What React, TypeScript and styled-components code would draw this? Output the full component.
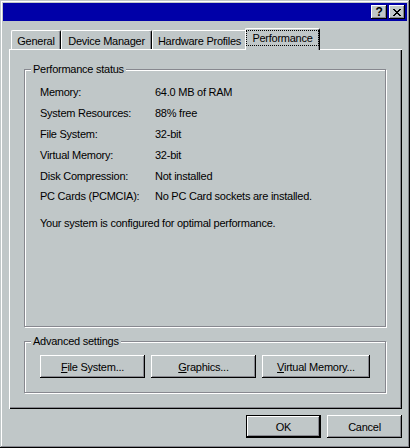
import { Fragment } from 'react';
import styled, { createGlobalStyle } from 'styled-components';

// Win95 palette (as captured in 16-bit colour)
const FACE = '#c0c7c8';
const SHADOW = '#87888f';
const FONT = `'Liberation Sans', Arial, sans-serif`;

const GlobalStyle = createGlobalStyle`
    html, body {
        margin: 0;
        padding: 0;
        background: ${FACE};
    }
    * {
        box-sizing: border-box;
    }
`;

// Styled Components
const Window = styled.div`
    width: 410px;
    height: 448px;
    padding: 3px;
    display: flex;
    flex-direction: column;
    background: ${FACE};
    font-family: ${FONT};
    font-size: 11px;
    // Arial runs a little wider than the bitmap MS Sans Serif, tighten it up
    letter-spacing: -0.25px;
    color: #000;
    box-shadow:
        inset -1px -1px 0 #000,
        inset 1px 1px 0 ${FACE},
        inset -2px -2px 0 ${SHADOW},
        inset 2px 2px 0 #fff;
`;

const TitleBar = styled.div`
    height: 18px;
    background: #0000a8;
    display: flex;
    align-items: center;
    justify-content: flex-end;
    gap: 2px;
    padding-right: 2px;
`;

const CaptionButton = styled.div`
    width: 16px;
    height: 14px;
    background: ${FACE};
    display: flex;
    align-items: center;
    justify-content: center;
    font-weight: bold;
    font-size: 12px;
    line-height: 1;
    box-shadow:
        inset -1px -1px 0 #000,
        inset 1px 1px 0 #fff,
        inset -2px -2px 0 ${SHADOW};
`;

const Body = styled.div`
    flex: 1;
    display: flex;
    flex-direction: column;
    padding: 7px 5px 0 6px;
`;

const TabStrip = styled.div`
    height: 21px;
    display: flex;
    align-items: flex-end;
    padding-left: 2px;
    position: relative;
    z-index: 1;
`;

const Tab = styled.div<{ $active?: boolean; $width: number }>`
    width: ${(p) => p.$width}px;
    height: ${(p) => (p.$active ? 22 : 19)}px;
    margin: ${(p) => (p.$active ? '0 -2px -1px -2px' : '0')};
    padding-top: ${(p) => (p.$active ? 0 : 2)}px;
    position: relative;
    z-index: ${(p) => (p.$active ? 2 : 1)};
    background: ${FACE};
    border-top: 1px solid #fff;
    border-left: 1px solid #fff;
    border-right: 1px solid #000;
    border-radius: 2px 2px 0 0;
    box-shadow: inset -1px 0 0 ${SHADOW};
    display: flex;
    align-items: center;
    justify-content: center;
    white-space: nowrap;
`;

const FocusLabel = styled.span`
    border: 1px dotted #000;
    padding: 0 5px;
    line-height: 14px;
    margin-bottom: 3px;
`;

const TabPanel = styled.div`
    height: 360px;
    display: flex;
    flex-direction: column;
    gap: 14px;
    padding: 20px 16px 16px 15px;
    box-shadow:
        inset 1px 1px 0 #fff,
        inset -1px -1px 0 #000,
        inset -2px -2px 0 ${SHADOW};
`;

// etched frame: dark line with a white line just inside/outside it
const GroupBox = styled.div<{ $grow?: boolean }>`
    position: relative;
    flex: ${(p) => (p.$grow ? '1' : '0 0 52px')};
    border: 1px solid ${SHADOW};
    box-shadow:
        inset 1px 1px 0 #fff,
        1px 1px 0 #fff;
`;

const Legend = styled.span`
    position: absolute;
    top: -7px;
    left: 6px;
    padding: 0 2px;
    line-height: 13px;
    background: ${FACE};
    white-space: nowrap;
`;

const StatusList = styled.div`
    display: grid;
    grid-template-columns: 115px 1fr;
    grid-auto-rows: 20.8px;
    align-items: center;
    padding: 12px 0 0 15px;
`;

const Note = styled.p`
    margin: 6px 0 0 15px;
    line-height: 21px;
`;

const ButtonRow = styled.div`
    display: flex;
    gap: 6px;
    padding: 13px 0 0 15px;
`;

const PushButton = styled.button<{ $width: number; $default?: boolean }>`
    width: ${(p) => p.$width}px;
    height: 23px;
    padding: 0;
    margin: 0;
    border: ${(p) => (p.$default ? '1px solid #000' : 'none')};
    background: ${FACE};
    color: #000;
    font-family: ${FONT};
    font-size: 11px;
    letter-spacing: -0.25px;
    box-shadow:
        inset -1px -1px 0 #000,
        inset 1px 1px 0 #fff,
        inset -2px -2px 0 ${SHADOW};
`;

const Key = styled.span`
    text-decoration: underline;
`;

const Footer = styled.div`
    display: flex;
    justify-content: flex-end;
    gap: 6px;
    margin-top: 6px;
`;

// 8x7 bitmap of the classic close cross
const CROSS = ['XX....XX', '.XX..XX.', '..XXXX..', '...XX...', '..XXXX..', '.XX..XX.', 'XX....XX'];

const CloseGlyph = () => (
    <svg width="8" height="7" viewBox="0 0 8 7" shapeRendering="crispEdges">
        {CROSS.flatMap((row, y) =>
            row
                .split('')
                .map((c, x) => (c === 'X' ? <rect key={`${x}-${y}`} x={x} y={y} width="1" height="1" fill="#000" /> : null)),
        )}
    </svg>
);

const STATUS: [string, string][] = [
    ['Memory:', '64.0 MB of RAM'],
    ['System Resources:', '88% free'],
    ['File System:', '32-bit'],
    ['Virtual Memory:', '32-bit'],
    ['Disk Compression:', 'Not installed'],
    ['PC Cards (PCMCIA):', 'No PC Card sockets are installed.'],
];

export default function App() {
    return (
        <>
            <GlobalStyle />
            <Window>
                <TitleBar>
                    <CaptionButton>?</CaptionButton>
                    <CaptionButton>
                        <CloseGlyph />
                    </CaptionButton>
                </TitleBar>
                <Body>
                    <TabStrip>
                        <Tab $width={50}>General</Tab>
                        <Tab $width={91}>Device Manager</Tab>
                        <Tab $width={95}>Hardware Profiles</Tab>
                        <Tab $width={75} $active>
                            <FocusLabel>Performance</FocusLabel>
                        </Tab>
                    </TabStrip>
                    <TabPanel>
                        <GroupBox $grow>
                            <Legend>Performance status</Legend>
                            <StatusList>
                                {STATUS.map(([label, value]) => (
                                    <Fragment key={label}>
                                        <span>{label}</span>
                                        <span>{value}</span>
                                    </Fragment>
                                ))}
                            </StatusList>
                            <Note>Your system is configured for optimal performance.</Note>
                        </GroupBox>
                        <GroupBox>
                            <Legend>Advanced settings</Legend>
                            <ButtonRow>
                                <PushButton $width={105}>
                                    <Key>F</Key>ile System...
                                </PushButton>
                                <PushButton $width={105}>
                                    <Key>G</Key>raphics...
                                </PushButton>
                                <PushButton $width={108}>
                                    <Key>V</Key>irtual Memory...
                                </PushButton>
                            </ButtonRow>
                        </GroupBox>
                    </TabPanel>
                    <Footer>
                        <PushButton $width={75} $default>
                            OK
                        </PushButton>
                        <PushButton $width={75}>Cancel</PushButton>
                    </Footer>
                </Body>
            </Window>
        </>
    );
}
